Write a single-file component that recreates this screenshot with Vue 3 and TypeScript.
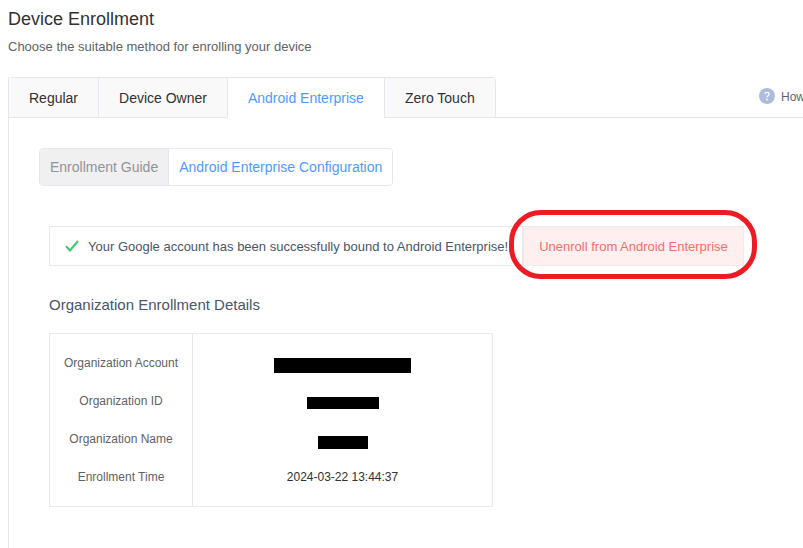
<script setup lang="ts">
interface DetailRow {
  label: string
  value?: string
  maskWidth?: number
  maskHeight?: number
  maskOffset?: number
}

const tabs = ['Regular', 'Device Owner', 'Android Enterprise', 'Zero Touch']
const activeTab = 'Android Enterprise'

const rows: DetailRow[] = [
  { label: 'Organization Account', maskWidth: 137, maskHeight: 15, maskOffset: 5 },
  { label: 'Organization ID', maskWidth: 72, maskHeight: 12, maskOffset: 4 },
  { label: 'Organization Name', maskWidth: 50, maskHeight: 13, maskOffset: 6 },
  { label: 'Enrollment Time', value: '2024-03-22 13:44:37' },
]
</script>

<template>
  <div class="page">
    <h1 class="page-title">Device Enrollment</h1>
    <p class="page-desc">Choose the suitable method for enrolling your device</p>

    <div class="panel">
      <div class="tab-bar">
        <div class="tabs">
          <div
            v-for="tab in tabs"
            :key="tab"
            class="tab"
            :class="{ 'tab--active': tab === activeTab }"
          >
            {{ tab }}
          </div>
        </div>
        <div class="help">
          <svg class="help__icon" viewBox="0 0 16 16" aria-hidden="true">
            <circle cx="8" cy="8" r="8" fill="#adbbdc" />
            <path
              d="M5.9 6.2A2.1 2.1 0 0 1 8 4.4c1.2 0 2.1.8 2.1 1.8 0 1.5-2.1 1.6-2.1 3.2"
              fill="none"
              stroke="#fff"
              stroke-width="1.3"
            />
            <circle cx="8" cy="11.5" r=".9" fill="#fff" />
          </svg>
          <span class="help__text">How</span>
        </div>
      </div>

      <div class="panel-body">
        <div class="segment">
          <div class="segment__item">Enrollment Guide</div>
          <div class="segment__item segment__item--active">Android Enterprise Configuration</div>
        </div>

        <div class="status-row">
          <div class="status">
            <svg class="status__icon" viewBox="0 0 14 12" aria-hidden="true">
              <path d="M1 6.2 5 10.4 13 1" fill="none" stroke="#3ec66d" stroke-width="2" />
            </svg>
            <span>Your Google account has been successfully bound to Android Enterprise!</span>
          </div>
          <button type="button" class="unenroll">Unenroll from Android Enterprise</button>
          <div class="annotation"></div>
        </div>

        <h2 class="section-title">Organization Enrollment Details</h2>

        <div class="details">
          <div class="details__labels">
            <div v-for="row in rows" :key="row.label" class="details__cell">{{ row.label }}</div>
          </div>
          <div class="details__values">
            <div v-for="row in rows" :key="row.label" class="details__cell">
              <template v-if="row.value">{{ row.value }}</template>
              <span
                v-else
                class="mask"
                :style="{
                  width: `${row.maskWidth}px`,
                  height: `${row.maskHeight}px`,
                  marginTop: `${row.maskOffset}px`,
                }"
              ></span>
            </div>
          </div>
        </div>
      </div>
    </div>
  </div>
</template>

<style>
html,
body {
  margin: 0;
  background: #fff;
  overflow: hidden;
}
</style>

<style scoped>
.page {
  width: 803px;
  height: 548px;
  box-sizing: border-box;
  padding: 10px 0 0 8px;
  overflow: hidden;
  font-family: 'Liberation Sans', Arial, sans-serif;
  color: #303133;
}

.page-title {
  margin: 0;
  font-size: 18px;
  font-weight: 400;
  line-height: 18px;
  color: #303133;
}

.page-desc {
  margin: 10px 0 0;
  font-size: 13px;
  line-height: 18px;
  color: #606266;
}

.panel {
  margin-top: 21px;
  border-left: 1px solid #e4e7ed;
  height: 500px;
}

.tab-bar {
  display: flex;
  justify-content: space-between;
  height: 41px;
  box-sizing: border-box;
  border-bottom: 1px solid #e4e7ed;
}

.tabs {
  display: flex;
  height: 41px;
  border-top: 1px solid #e4e7ed;
  border-right: 1px solid #e4e7ed;
  border-radius: 4px 4px 0 0;
  box-sizing: border-box;
}

.tab {
  display: flex;
  align-items: center;
  justify-content: center;
  box-sizing: border-box;
  height: 40px;
  padding: 0 20px;
  font-size: 14px;
  background: #f9f9fa;
  border-bottom: 1px solid #e4e7ed;
  border-left: 1px solid #e4e7ed;
}

.tab:first-child {
  border-left: 0;
}

.tab--active {
  color: #4e9bff;
  background: #fff;
  border-bottom-color: #fff;
}

.help {
  display: flex;
  align-items: center;
  gap: 6px;
  height: 40px;
  flex: none;
  width: 44px;
  overflow: hidden;
  white-space: nowrap;
  font-size: 12px;
  color: #606266;
}

.help__icon {
  width: 16px;
  height: 16px;
  flex: none;
  margin-top: -2px;
}

.panel-body {
  padding: 30px 0 0 30px;
}

.segment {
  display: inline-flex;
  height: 38px;
  box-sizing: border-box;
  border: 1px solid #e4e7ed;
  border-radius: 4px;
  overflow: hidden;
  font-size: 14px;
  vertical-align: top;
}

.segment__item {
  display: flex;
  align-items: center;
  padding: 0 10px;
  background: #f0f0f0;
  color: #909399;
}

.segment__item--active {
  background: #fff;
  color: #4e9bff;
  border-left: 1px solid #e4e7ed;
}

.status-row {
  position: relative;
  display: flex;
  margin: 40px 0 0 10px;
  height: 40px;
}

.status {
  display: flex;
  align-items: center;
  box-sizing: border-box;
  width: 474px;
  padding-left: 15px;
  border: 1px solid #e9e9e9;
  font-size: 13px;
  white-space: nowrap;
  color: #4a5568;
}

.status__icon {
  width: 14px;
  height: 12px;
  margin-right: 9px;
  flex: none;
}

.unenroll {
  width: 221px;
  height: 40px;
  padding: 0;
  border: 1px solid #ececec;
  border-radius: 0;
  background: #fff0ef;
  color: #f56c6c;
  font: 13px 'Liberation Sans', Arial, sans-serif;
}

.annotation {
  position: absolute;
  left: 460px;
  top: -16px;
  width: 248px;
  height: 69px;
  box-sizing: border-box;
  border: 5px solid #ed1c24;
  border-radius: 32px;
}

.section-title {
  margin: 29px 0 0 10px;
  font-size: 15px;
  font-weight: 400;
  line-height: 20px;
  color: #4a5568;
}

.details {
  display: flex;
  width: 444px;
  height: 174px;
  box-sizing: border-box;
  margin: 18px 0 0 10px;
  border: 1px solid #e9e9e9;
  font-size: 12px;
}

.details__labels {
  box-sizing: border-box;
  width: 143px;
  padding-top: 10px;
  border-right: 1px solid #e9e9e9;
  color: #606266;
}

.details__values {
  flex: 1;
  padding-top: 10px;
}

.details__cell {
  display: flex;
  align-items: center;
  justify-content: center;
  height: 38px;
}

.mask {
  display: block;
  background: #000;
}
</style>
